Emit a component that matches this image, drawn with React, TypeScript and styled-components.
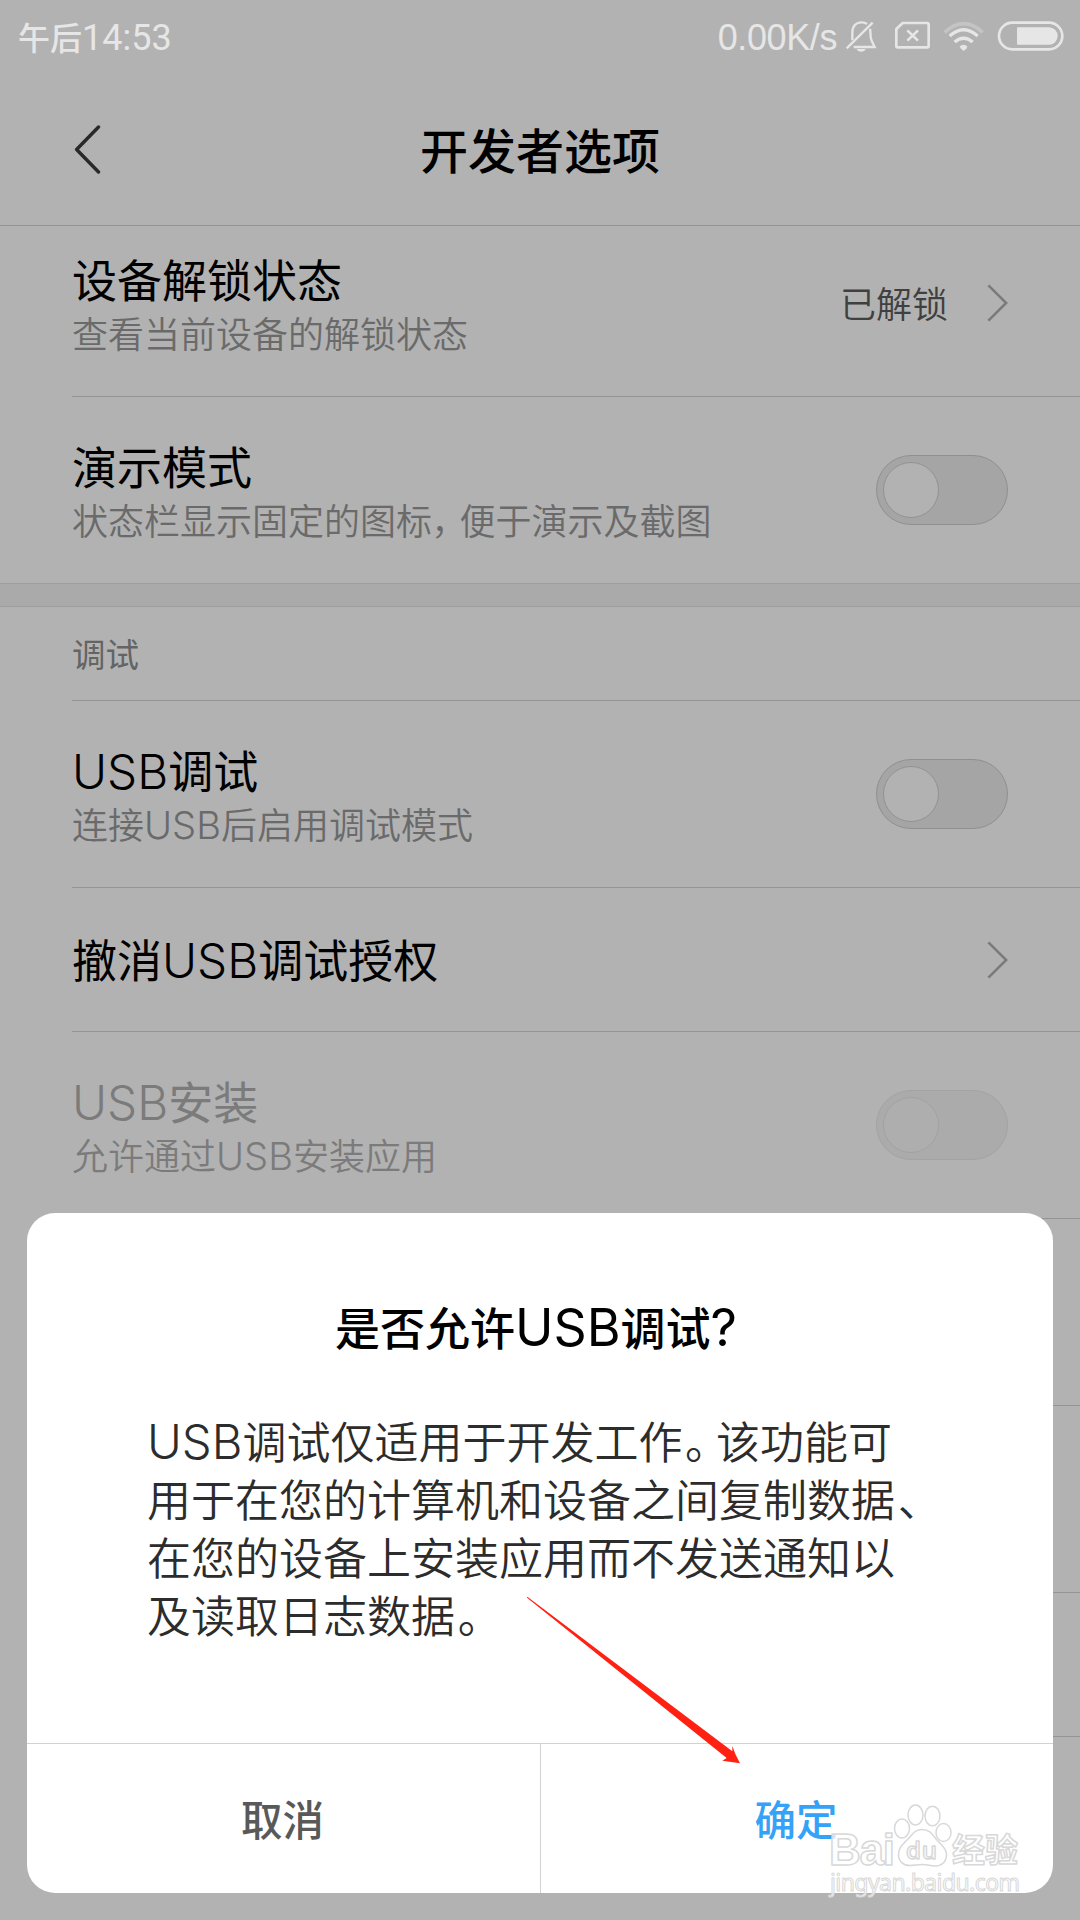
import React from "react";
import styled, { createGlobalStyle } from "styled-components";

const cjk = '"Noto Sans CJK SC", "Liberation Sans", sans-serif';

const GlobalStyle = createGlobalStyle`
  body { margin: 0; background: #b2b2b2; }
  * { box-sizing: border-box; }
`;

const Screen = styled.div`
  position: relative;
  display: flex;
  flex-direction: column;
  width: 1080px;
  height: 1920px;
  overflow: hidden;
  background: #b2b2b2;
  font-family: ${cjk};
  color: #000;
  white-space: nowrap;
`;

const StatusBar = styled.header`
  display: flex;
  align-items: center;
  height: 72px;
  padding: 0 15px 0 18px;
  color: #e6e6e6;
`;

const Clock = styled.div`
  flex: 1;
  font-size: 32px;
  line-height: 72px;
  font-weight: 500;
`;

const ClockDigits = styled.span`
  font-family: Roboto, sans-serif;
  font-size: 36px;
  font-weight: 400;
  line-height: 0;
`;

const NetSpeed = styled.div`
  font-family: "Liberation Sans", sans-serif;
  font-size: 36px;
  line-height: 72px;
  letter-spacing: -0.4px;
  padding-top: 3px;
  margin-right: 8px;
`;

const TitleBar = styled.div`
  display: grid;
  grid-template-columns: 120px 1fr 120px;
  align-items: center;
  height: 154px;
  border-bottom: 1px solid #949494;
`;

const BackButton = styled.button`
  display: flex;
  padding: 0 0 0 73px;
  border: 0;
  background: none;
`;

const PageTitle = styled.h1`
  margin: 0 0 2px;
  font-size: 48px;
  font-weight: 500;
  line-height: 60px;
  text-align: center;
`;

const List = styled.div`
  flex: 1;
  overflow: hidden;
`;

const Row = styled.div<{ $h?: number; $scrolled?: boolean; $last?: boolean }>`
  display: flex;
  align-items: center;
  height: ${(p) => p.$h ?? 187}px;
  margin-top: ${(p) => (p.$scrolled ? -16 : 0)}px;
  margin-left: 72px;
  padding-right: 72px;
  border-bottom: ${(p) => (p.$last ? 0 : 1)}px solid #949494;
`;

const Labels = styled.div`
  flex: 1;
  padding-bottom: 1px;
`;

const RowTitle = styled.div<{ $off?: boolean }>`
  font-size: 45px;
  line-height: 58px;
  color: ${(p) => (p.$off ? "#7b7b7b" : "#000")};
`;

const RowNote = styled.div<{ $off?: boolean }>`
  font-size: 36px;
  line-height: 48px;
  font-weight: 350;
  color: ${(p) => (p.$off ? "#7b7b7b" : "#6a6a6a")};
`;

const Latin = styled.span<{ $scale?: number; $weight?: number }>`
  font-family: Inter, sans-serif;
  font-size: ${(p) => p.$scale ?? 1.06}em;
  font-weight: ${(p) => p.$weight ?? 350};
  line-height: 0;
`;

// Half-width punctuation with a little room on both sides.
const Tight = styled.span<{ $lead?: number }>`
  font-feature-settings: "halt" 1;
  margin-left: ${(p) => p.$lead ?? 0}em;
  margin-right: ${(p) => 0.265 - (p.$lead ?? 0)}em;
`;

const Value = styled.div`
  margin-right: 38px;
  font-size: 36px;
  line-height: 48px;
  padding-bottom: 2px;
  font-weight: 350;
  color: #404040;
`;

const Gap = styled.div`
  height: 24px;
  background: #aaa;
  border: solid #9e9e9e;
  border-width: 1px 0;
`;

const SectionName = styled.div`
  display: flex;
  align-items: center;
  height: 94px;
  margin-left: 72px;
  padding-bottom: 3px;
  border-bottom: 1px solid #949494;
  font-size: 33.5px;
  color: #646464;
`;

const Track = styled.div<{ $off?: boolean }>`
  width: 132px;
  height: 70px;
  padding: 6px;
  border: 1px solid ${(p) => (p.$off ? "#a3a3a3" : "#8f8f8f")};
  border-radius: 35px;
  background: ${(p) => (p.$off ? "#ababab" : "#a5a5a5")};
`;

const Knob = styled.div<{ $off?: boolean }>`
  width: 56px;
  height: 56px;
  border: 1px solid ${(p) => (p.$off ? "#a2a2a2" : "#929292")};
  border-radius: 50%;
  background: ${(p) => (p.$off ? "#aeaeae" : "#b2b2b2")};
`;

const Overlay = styled.div`
  position: absolute;
  inset: 0;
  display: flex;
  align-items: flex-end;
  padding: 27px;
`;

const Dialog = styled.section`
  display: flex;
  flex-direction: column;
  width: 1026px;
  height: 680px;
  border-radius: 28px;
  background: #fff;
  overflow: hidden;
`;

const DialogTitle = styled.h2`
  margin: 0;
  padding: 84px 8px 0 0;
  font-size: 45px;
  font-weight: 500;
  line-height: 60px;
  text-align: center;
`;

const DialogText = styled.p`
  flex: 1;
  margin: 0;
  padding: 54px 0 0 120px;
  font-size: 44px;
  font-weight: 350;
  line-height: 58px;
  color: #2c2c2c;
`;

const Line = styled.span`
  display: block;
`;

const Actions = styled.div`
  display: grid;
  grid-template-columns: 514px 1fr;
  height: 150px;
  border-top: 1px solid #d2d2d2;
`;

const Action = styled.button<{ $primary?: boolean }>`
  padding: 0 2px 1px 0;
  border: 0;
  border-right: ${(p) => (p.$primary ? "0" : "1px solid #d2d2d2")};
  background: none;
  font-family: inherit;
  font-size: 41.5px;
  font-weight: 500;
  color: ${(p) => (p.$primary ? "#35a2f7" : "#595959")};
`;

const Annotation = styled.svg`
  position: absolute;
  left: 520px;
  top: 1590px;
`;

const Watermark = styled.svg`
  position: absolute;
  left: 820px;
  top: 1800px;
`;

const Switch = ({ off }: { off?: boolean }) => (
  <Track $off={off}>
    <Knob $off={off} />
  </Track>
);

const Chevron = () => (
  <svg width="22" height="40" viewBox="0 0 22 40" fill="none" stroke="#7b7b7b" strokeWidth="2.6">
    <path d="M2.4 2.4 20.2 20 2.4 37.6" />
  </svg>
);

// Status icons share one strip so their spacing stays fixed.
const StatusIcons = () => (
  <svg width="220" height="40" viewBox="436 49 660 120" fill="none" stroke="#e6e6e6" strokeWidth="8">
    <path d="M441 146 519 69" strokeWidth="7" />
    <path d="M458 122V100C458 78 470 68 486 68c7 0 12 2 16 5M511 87c3 12-1 24 5 36l9 19H462" strokeWidth="7" />
    <path d="M471 148h27c-3 11-24 11-27 0z" fill="#e6e6e6" stroke="none" />
    <path d="M609 70h74q4 0 4 4v65q0 4-4 4h-89q-4 0-4-4V88z" strokeLinejoin="round" />
    <path d="m623 92 32 31m0-31-32 31" />
    <path d="M735 98q57-52 114 0" stroke="#c4c4c4" strokeWidth="11" />
    <path d="M750 109q42-38 84 0" strokeWidth="10" />
    <path d="M765 127q27-23 54 0" strokeWidth="10" />
    <path d="M780 140q12-9 23 0l-2 6-9 8-9-8z" fill="#e6e6e6" stroke="none" />
    <rect x="898" y="69" width="190" height="80" rx="40" />
    <path d="M955 83h93a26 26 0 0 1 0 52h-93q-3 0-3-3V86q0-3 3-3z" fill="#e6e6e6" stroke="none" />
  </svg>
);

export default function App() {
  return (
    <Screen>
      <GlobalStyle />
      <StatusBar>
        <Clock>
          午后<ClockDigits>14:53</ClockDigits>
        </Clock>
        <NetSpeed>0.00K/s</NetSpeed>
        <StatusIcons />
      </StatusBar>

      <TitleBar>
        <BackButton aria-label="返回">
          <svg width="28" height="50" viewBox="0 0 28 50" fill="none" stroke="#292929" strokeWidth="3.4" strokeLinecap="round" strokeLinejoin="round">
            <path d="M25.5 3 3.6 25.5 25.5 48" />
          </svg>
        </BackButton>
        <PageTitle>开发者选项</PageTitle>
      </TitleBar>

      <List>
        <Row $scrolled>
          <Labels>
            <RowTitle>设备解锁状态</RowTitle>
            <RowNote>查看当前设备的解锁状态</RowNote>
          </Labels>
          <Value>已解锁</Value>
          <Chevron />
        </Row>
        <Row $h={186} $last>
          <Labels>
            <RowTitle>演示模式</RowTitle>
            <RowNote>
              状态栏显示固定的图标<Tight $lead={-0.02}>，</Tight>便于演示及截图
            </RowNote>
          </Labels>
          <Switch />
        </Row>
        <Gap />
        <SectionName>调试</SectionName>
        <Row>
          <Labels>
            <RowTitle><Latin>USB</Latin>调试</RowTitle>
            <RowNote>连接<Latin>USB</Latin>后启用调试模式</RowNote>
          </Labels>
          <Switch />
        </Row>
        <Row $h={144}>
          <Labels>
            <RowTitle>撤消<Latin>USB</Latin>调试授权</RowTitle>
          </Labels>
          <Chevron />
        </Row>
        <Row>
          <Labels>
            <RowTitle $off><Latin>USB</Latin>安装</RowTitle>
            <RowNote $off>允许通过<Latin>USB</Latin>安装应用</RowNote>
          </Labels>
          <Switch off />
        </Row>
        <Row />
        <Row />
        <Row $h={144} />
      </List>

      <Overlay>
        <Dialog role="dialog">
          <DialogTitle>
            是否允许<Latin $scale={1.15} $weight={400}>USB</Latin>调试<Latin $scale={1.15} $weight={400}>?</Latin>
          </DialogTitle>
          <DialogText>
            <Line><Latin $scale={1.075}>USB</Latin>调试仅适用于开发工作<Tight $lead={0.06}>。</Tight>该功能可</Line>
            <Line>用于在您的计算机和设备之间复制数据<Tight $lead={0.06}>、</Tight></Line>
            <Line>在您的设备上安装应用而不发送通知以</Line>
            <Line>及读取日志数据<Tight $lead={0.06}>。</Tight></Line>
          </DialogText>
          <Actions>
            <Action>取消</Action>
            <Action $primary>确定</Action>
          </Actions>
        </Dialog>
      </Overlay>

      <Annotation width="230" height="190" viewBox="60 30 690 570">
        <path d="M82 50 697 514V498L706 522 720 550 667 542 680 534 81 53z" fill="#ff2213" />
      </Annotation>

      <Watermark width="220" height="120" viewBox="820 1800 220 120">
        <g fill="#fff" fillOpacity="0.75" stroke="#d8d8d8" strokeWidth="1.5" strokeLinejoin="round">
          <text x="829" y="1865" fontFamily="Liberation Sans, sans-serif" fontWeight="700" fontSize="44" textLength="66">Bai</text>
          <ellipse cx="902" cy="1828.500" rx="7.500" ry="9.500" />
          <ellipse cx="915.500" cy="1815" rx="7.500" ry="10" />
          <ellipse cx="932.500" cy="1816" rx="7.500" ry="9.800" />
          <ellipse cx="943.500" cy="1832.500" rx="7.500" ry="9" />
          <path d="M922 1829.500c-8 0-10 6-15 10.500-5 5-8.500 8-8.500 14.500 0 7 5 11 11 11 5 0 8-1 13-1s8 1.500 13 1.500c6 0 11-4 11-11.500 0-7-6-10-10-15-4-5-6.500-10-14.500-10z" />
          <text x="906" y="1859" fontFamily="Open Sans, sans-serif" fontWeight="600" fontSize="24" textLength="31">du</text>
          <text x="952" y="1862" fontFamily="Noto Sans CJK SC, sans-serif" fontWeight="700" fontSize="33" textLength="66">经验</text>
          <text x="830" y="1890.500" fontFamily="Noto Sans, sans-serif" fontSize="23" textLength="190" strokeWidth="1">jingyan.baidu.com</text>
        </g>
      </Watermark>
    </Screen>
  );
}
